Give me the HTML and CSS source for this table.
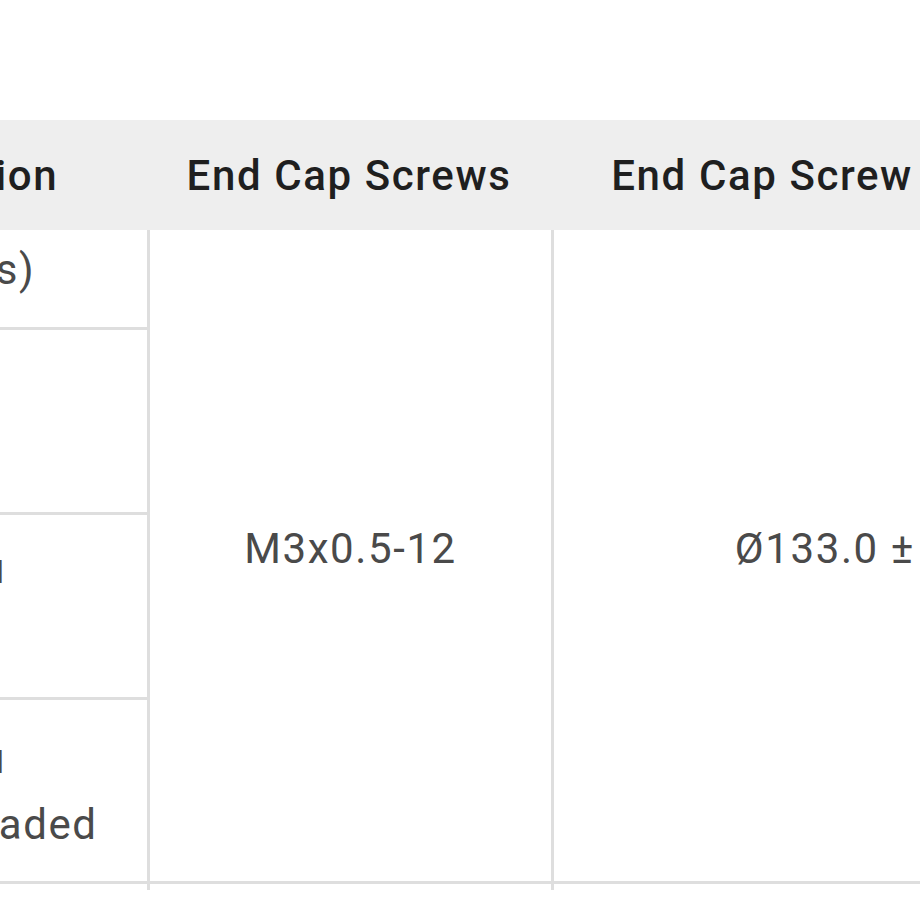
FILE: index.html
```html
<!DOCTYPE html>
<html lang="en">
<head>
<meta charset="utf-8">
<title>End Cap Screws</title>
<link rel="stylesheet" href="styles.css">
</head>
<body>
<table class="spec">
  <colgroup>
    <col class="w1">
    <col class="w2">
    <col class="w3">
  </colgroup>
  <thead>
    <tr>
      <th class="h1">Version</th>
      <th class="hc">End Cap Screws</th>
      <th class="hc">End Cap Screw Bolt Circle</th>
    </tr>
  </thead>
  <tbody>
    <tr class="r1">
      <td class="c1">(Sets)</td>
      <td class="span" rowspan="4">M3x0.5-12</td>
      <td class="span" rowspan="4">Ø133.0 ± 0.10</td>
    </tr>
    <tr class="r2">
      <td class="c1">Std</td>
    </tr>
    <tr class="r3">
      <td class="c1">Thru<br>Fit</td>
    </tr>
    <tr class="r4">
      <td class="c1"><span class="wide">Thru</span><br>Threaded</td>
    </tr>
    <tr class="tail">
      <td class="t1"></td>
      <td class="t2"></td>
      <td class="t2"></td>
    </tr>
  </tbody>
</table>
</body>
</html>
```

FILE: styles.css
```css
html, body {
  margin: 0;
  padding: 0;
  background: #ffffff;
  overflow: hidden;
}

body {
  font-family: Roboto, "Liberation Sans", Arial, sans-serif;
  font-size: 42px;
  line-height: 66px;
  letter-spacing: 1.6px;
  color: #4a4a4a;
}

.spec {
  margin: 120px 0 0 -200px;
  width: 1396px;
  table-layout: fixed;
  border-collapse: separate;
  border-spacing: 0;
}

.w1 { width: 347px; }
.w2 { width: 404px; }
.w3 { width: 645px; }

.spec th {
  background: #eeeeee;
  color: #1f1f1f;
  font-weight: 500;
  padding: 23px 0 21px 0;
  white-space: nowrap;
  overflow: hidden;
}

.spec .h1 {
  text-align: left;
  padding-left: 104px;
}

.spec .hc {
  text-align: center;
}

.spec td {
  padding: 0;
  white-space: nowrap;
}

.spec .c1 {
  text-align: left;
  padding-left: 114px;
  border-bottom: 3px solid #dedede;
  vertical-align: top;
}

.r1 .c1 { padding-top: 7px; padding-bottom: 24px; }
.r2 .c1 { padding-top: 25px; padding-bottom: 25px; height: 132px; }
.r3 .c1 { padding-top: 21px; padding-bottom: 29px; }
.r4 .c1 { padding-top: 26px; padding-bottom: 23px; padding-left: 108px; }

.wide {
  letter-spacing: 3.6px;
}

.spec .span {
  text-align: center;
  vertical-align: middle;
  border-left: 3px solid #dedede;
  border-bottom: 3px solid #dedede;
  padding-bottom: 14px;
}

.tail td {
  height: 6px;
  padding: 0;
  line-height: 0;
  font-size: 0;
}

.tail .t2 {
  border-left: 3px solid #dedede;
}
```
